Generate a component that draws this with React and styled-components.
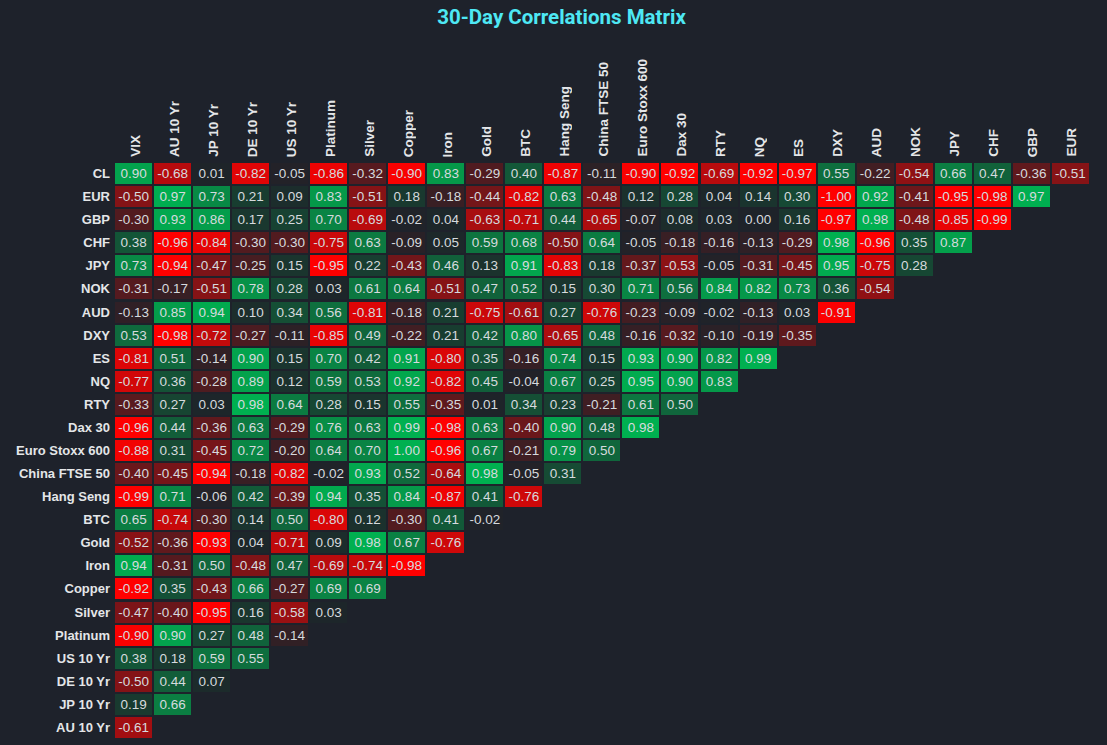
import React from 'react';
import styled, { createGlobalStyle } from 'styled-components';

const GlobalStyle = createGlobalStyle`
  html, body {
    margin: 0;
    padding: 0;
    background: #1e222b;
  }
`;

const Page = styled.div`
  width: 1107px;
  height: 745px;
  background: #1e222b;
  font-family: "Liberation Sans", Arial, sans-serif;
  overflow: hidden;
`;

const Title = styled.h1`
  margin: 0;
  height: 36px;
  padding: 5px 0 0 16px;
  box-sizing: border-box;
  text-align: center;
  font-family: Roboto, "Noto Sans", sans-serif;
  font-size: 20.5px;
  line-height: 24px;
  font-weight: 700;
  color: #4ee8f4;
`;

const Matrix = styled.div`
  display: flex;
  flex-direction: column;
  gap: 2.08px;
`;

const Row = styled.div`
  display: grid;
  grid-template-columns: 113px repeat(25, 37px);
  column-gap: 2.04px;
  height: ${props => props.header ? '125px' : '21px'};
`;

const HeaderCell = styled.div`
  display: flex;
  align-items: flex-end;
  justify-content: center;
  padding-bottom: 4px;
  padding-left: 3px;
`;

const HeaderText = styled.span`
  writing-mode: vertical-rl;
  transform: rotate(180deg);
  white-space: nowrap;
  font-size: 13.5px;
  font-weight: 700;
  color: #e4e6e8;
  line-height: 15px;
`;

const RowLabel = styled.div`
  display: flex;
  align-items: center;
  justify-content: flex-end;
  padding-right: 3px;
  font-size: 13px;
  font-weight: 700;
  color: #e4e6e8;
  white-space: nowrap;
`;

const Cell = styled.div`
  display: flex;
  align-items: center;
  justify-content: center;
  font-size: 13.5px;
  color: #d6dade;
  background: ${props => props.bg};
`;

const columns = [
  'VIX', 'AU 10 Yr', 'JP 10 Yr', 'DE 10 Yr', 'US 10 Yr', 'Platinum', 'Silver',
  'Copper', 'Iron', 'Gold', 'BTC', 'Hang Seng', 'China FTSE 50', 'Euro Stoxx 600',
  'Dax 30', 'RTY', 'NQ', 'ES', 'DXY', 'AUD', 'NOK', 'JPY', 'CHF', 'GBP', 'EUR',
];

const rows = [
  ['CL', [0.90, -0.68, 0.01, -0.82, -0.05, -0.86, -0.32, -0.90, 0.83, -0.29, 0.40, -0.87, -0.11, -0.90, -0.92, -0.69, -0.92, -0.97, 0.55, -0.22, -0.54, 0.66, 0.47, -0.36, -0.51]],
  ['EUR', [-0.50, 0.97, 0.73, 0.21, 0.09, 0.83, -0.51, 0.18, -0.18, -0.44, -0.82, 0.63, -0.48, 0.12, 0.28, 0.04, 0.14, 0.30, -1.00, 0.92, -0.41, -0.95, -0.98, 0.97]],
  ['GBP', [-0.30, 0.93, 0.86, 0.17, 0.25, 0.70, -0.69, -0.02, 0.04, -0.63, -0.71, 0.44, -0.65, -0.07, 0.08, 0.03, 0.00, 0.16, -0.97, 0.98, -0.48, -0.85, -0.99]],
  ['CHF', [0.38, -0.96, -0.84, -0.30, -0.30, -0.75, 0.63, -0.09, 0.05, 0.59, 0.68, -0.50, 0.64, -0.05, -0.18, -0.16, -0.13, -0.29, 0.98, -0.96, 0.35, 0.87]],
  ['JPY', [0.73, -0.94, -0.47, -0.25, 0.15, -0.95, 0.22, -0.43, 0.46, 0.13, 0.91, -0.83, 0.18, -0.37, -0.53, -0.05, -0.31, -0.45, 0.95, -0.75, 0.28]],
  ['NOK', [-0.31, -0.17, -0.51, 0.78, 0.28, 0.03, 0.61, 0.64, -0.51, 0.47, 0.52, 0.15, 0.30, 0.71, 0.56, 0.84, 0.82, 0.73, 0.36, -0.54]],
  ['AUD', [-0.13, 0.85, 0.94, 0.10, 0.34, 0.56, -0.81, -0.18, 0.21, -0.75, -0.61, 0.27, -0.76, -0.23, -0.09, -0.02, -0.13, 0.03, -0.91]],
  ['DXY', [0.53, -0.98, -0.72, -0.27, -0.11, -0.85, 0.49, -0.22, 0.21, 0.42, 0.80, -0.65, 0.48, -0.16, -0.32, -0.10, -0.19, -0.35]],
  ['ES', [-0.81, 0.51, -0.14, 0.90, 0.15, 0.70, 0.42, 0.91, -0.80, 0.35, -0.16, 0.74, 0.15, 0.93, 0.90, 0.82, 0.99]],
  ['NQ', [-0.77, 0.36, -0.28, 0.89, 0.12, 0.59, 0.53, 0.92, -0.82, 0.45, -0.04, 0.67, 0.25, 0.95, 0.90, 0.83]],
  ['RTY', [-0.33, 0.27, 0.03, 0.98, 0.64, 0.28, 0.15, 0.55, -0.35, 0.01, 0.34, 0.23, -0.21, 0.61, 0.50]],
  ['Dax 30', [-0.96, 0.44, -0.36, 0.63, -0.29, 0.76, 0.63, 0.99, -0.98, 0.63, -0.40, 0.90, 0.48, 0.98]],
  ['Euro Stoxx 600', [-0.88, 0.31, -0.45, 0.72, -0.20, 0.64, 0.70, 1.00, -0.96, 0.67, -0.21, 0.79, 0.50]],
  ['China FTSE 50', [-0.40, -0.45, -0.94, -0.18, -0.82, -0.02, 0.93, 0.52, -0.64, 0.98, -0.05, 0.31]],
  ['Hang Seng', [-0.99, 0.71, -0.06, 0.42, -0.39, 0.94, 0.35, 0.84, -0.87, 0.41, -0.76]],
  ['BTC', [0.65, -0.74, -0.30, 0.14, 0.50, -0.80, 0.12, -0.30, 0.41, -0.02]],
  ['Gold', [-0.52, -0.36, -0.93, 0.04, -0.71, 0.09, 0.98, 0.67, -0.76]],
  ['Iron', [0.94, -0.31, 0.50, -0.48, 0.47, -0.69, -0.74, -0.98]],
  ['Copper', [-0.92, 0.35, -0.43, 0.66, -0.27, 0.69, 0.69]],
  ['Silver', [-0.47, -0.40, -0.95, 0.16, -0.58, 0.03]],
  ['Platinum', [-0.90, 0.90, 0.27, 0.48, -0.14]],
  ['US 10 Yr', [0.38, 0.18, 0.59, 0.55]],
  ['DE 10 Yr', [-0.50, 0.44, 0.07]],
  ['JP 10 Yr', [0.19, 0.66]],
  ['AU 10 Yr', [-0.61]],
];

// dark at zero, fading to red for negative and green for positive
const base = [30, 35, 41];
const cellColor = (v) => {
  const target = v < 0 ? [255, 0, 0] : [0, 176, 80];
  const t = v < 0
    ? Math.pow(Math.min(1, -v / 0.92), 1.3)
    : Math.pow(Math.min(1, v / 0.98), 1.1);
  const c = base.map((b, i) => Math.round(b + (target[i] - b) * t));
  return `rgb(${c[0]}, ${c[1]}, ${c[2]})`;
};

const App = () => (
  <Page>
    <GlobalStyle />
    <Title>30-Day Correlations Matrix</Title>
    <Matrix>
      <Row header>
        <div />
        {columns.map(col => (
          <HeaderCell key={col}>
            <HeaderText>{col}</HeaderText>
          </HeaderCell>
        ))}
      </Row>
      {rows.map(([label, values]) => (
        <Row key={label}>
          <RowLabel>{label}</RowLabel>
          {values.map((v, i) => (
            <Cell key={i} bg={cellColor(v)}>{v.toFixed(2)}</Cell>
          ))}
        </Row>
      ))}
    </Matrix>
  </Page>
);

export default App;
